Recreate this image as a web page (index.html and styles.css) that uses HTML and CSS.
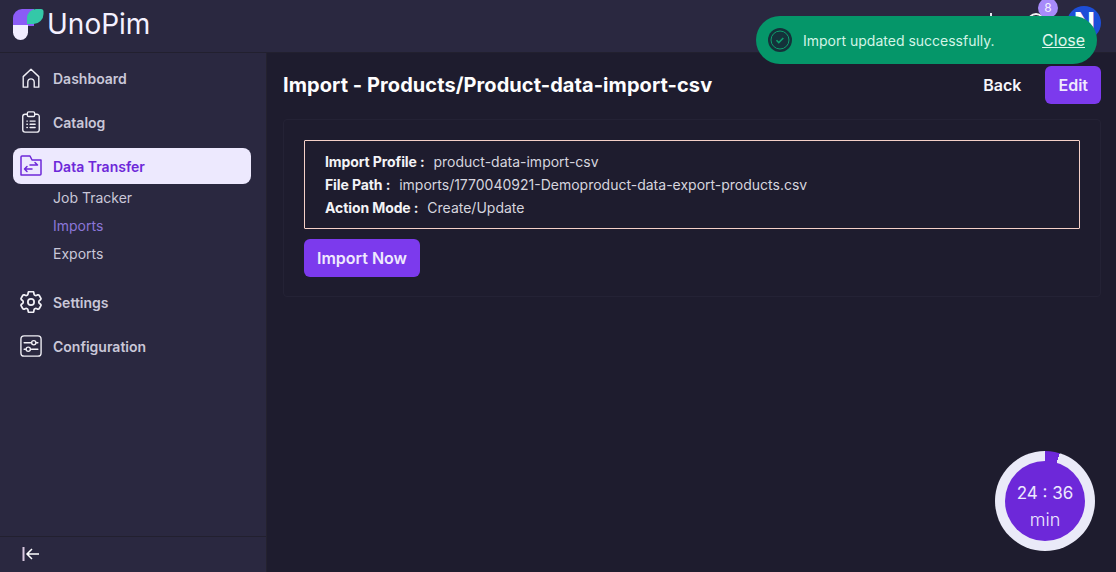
FILE: index.html
```html
<!DOCTYPE html>
<html>
<head>
	<meta charset="utf-8">
	<title>Import - UnoPim</title>
	<link rel="stylesheet" href="styles.css">
</head>
<body>
	<header class="topbar">
		<div class="logo">
			<svg class="logo-mark" width="31" height="31" viewBox="0 0 31 31">
				<path fill="#8b5cf6" d="M0 9a9 9 0 0 1 9-9h12v17H0z"/>
				<path fill="#f1edff" d="M0 16h15v7.500a7.500 7.500 0 0 1-15 0z"/>
				<path fill="#34c8a8" d="M14 9a9 9 0 0 1 9-9h5a2.500 2.500 0 0 1 2.500 2.500V5a10 10 0 0 1-10 10H14z"/>
			</svg>
			<span class="logo-text">UnoPim</span>
		</div>
		<div class="top-actions">
			<span class="tick"></span>
			<div class="bell"><span class="bell-ring"></span><span class="badge">8</span></div>
			<div class="avatar">N</div>
		</div>
	</header>

	<div class="layout">
		<aside class="sidebar">
			<nav class="menu">
				<a class="menu-item">
					<svg class="icon" viewBox="0 0 24 24"><path d="M3.500 22V10.500L12 2.500l8.500 8V22h-5v-5.500a3.500 3.500 0 0 0-7 0V22z"/></svg>
					Dashboard
				</a>
				<a class="menu-item">
					<svg class="icon" viewBox="0 0 24 24"><path d="M8 3.500H5.500a2.500 2.500 0 0 0-2.500 2.500v14.500a2.500 2.500 0 0 0 2.500 2.500h13a2.500 2.500 0 0 0 2.500-2.500V6a2.500 2.500 0 0 0-2.500-2.500H16"/><rect x="8" y="1" width="8" height="5" rx="1.500"/><path d="M7.500 11h.5M11 11h5.500M7.500 14.500h.5M11 14.500h5.500M7.500 18h.5M11 18h5.500"/></svg>
					Catalog
				</a>
				<a class="menu-item active">
					<svg class="icon" viewBox="0 0 22 22"><path d="M1 20V2a1 1 0 0 1 1-1h8l2 4h9v14a1 1 0 0 1-1 1H2a1 1 0 0 1-1-1z"/><path d="M10 10h7.500M15 7.500l2.500 2.500M4.500 14H12M7 11.500 4.500 14 7 16.500"/></svg>
					Data Transfer
				</a>
				<div class="submenu">
					<a>Job Tracker</a>
					<a class="current">Imports</a>
					<a>Exports</a>
				</div>
				<a class="menu-item">
					<svg class="icon" viewBox="2.500 2.500 19 19"><path d="M9.594 3.940c.09-.542.56-.94 1.110-.94h2.593c.55 0 1.020.398 1.110.94l.213 1.281c.063.374.313.686.645.870.074.040.147.083.22.127.325.196.72.257 1.075.124l1.217-.456a1.125 1.125 0 0 1 1.370.49l1.296 2.247a1.125 1.125 0 0 1-.26 1.431l-1.003.827c-.293.241-.438.613-.43.992a7.723 7.723 0 0 1 0 .255c-.008.378.137.75.43.991l1.004.827c.424.35.534.955.26 1.430l-1.298 2.247a1.125 1.125 0 0 1-1.369.491l-1.217-.456c-.355-.133-.75-.072-1.076.124a6.470 6.470 0 0 1-.22.128c-.331.183-.581.495-.644.869l-.213 1.281c-.09.543-.56.94-1.110.94h-2.594c-.55 0-1.019-.398-1.110-.94l-.213-1.281c-.062-.374-.312-.686-.644-.87a6.520 6.520 0 0 1-.22-.127c-.325-.196-.72-.257-1.076-.124l-1.217.456a1.125 1.125 0 0 1-1.369-.49l-1.297-2.247a1.125 1.125 0 0 1 .26-1.431l1.004-.827c.292-.24.437-.613.43-.991a6.932 6.932 0 0 1 0-.255c.007-.38-.138-.751-.43-.992l-1.004-.827a1.125 1.125 0 0 1-.26-1.430l1.297-2.247a1.125 1.125 0 0 1 1.370-.491l1.216.456c.356.133.751.072 1.076-.124.072-.044.146-.086.22-.128.332-.183.582-.495.644-.869l.214-1.280z"/><circle cx="12" cy="12" r="2.700"/></svg>
					Settings
				</a>
				<a class="menu-item">
					<svg class="icon" viewBox="0 0 24 24"><rect x="1" y="1" width="22" height="22" rx="3.500"/><path d="M4.500 8.500h7M18 8.500h1.500M4.500 15.500H6M12.500 15.500h7"/><circle cx="15" cy="8.500" r="2.300"/><circle cx="9" cy="15.500" r="2.300"/></svg>
					Configuration
				</a>
			</nav>
			<div class="collapse">
				<svg width="18" height="14" viewBox="0 0 18 14"><path class="collapse-bar" d="M1.500 0v14"/><path class="collapse-arrow" d="M17 7H5M10 2 5 7l5 5"/></svg>
			</div>
		</aside>

		<main class="content">
			<div class="page-head">
				<h1>Import - Products/Product-data-import-csv</h1>
				<div class="page-actions">
					<a class="back">Back</a>
					<a class="btn">Edit</a>
				</div>
			</div>
			<section class="card">
				<div class="info-box">
					<p><b>Import Profile :</b> product-data-import-csv</p>
					<p><b>File Path :</b> imports/1770040921-Demoproduct-data-export-products.csv</p>
					<p><b>Action Mode :</b> Create/Update</p>
				</div>
				<a class="btn btn-import">Import Now</a>
			</section>
		</main>
	</div>

	<div class="toast">
		<svg width="24" height="24" viewBox="0 0 24 24">
			<circle cx="12" cy="12" r="12" fill="#14323a"/>
			<circle cx="12" cy="12" r="9" fill="none" stroke="#0e9f6e" stroke-width="1"/>
			<path d="M8.500 12.200l2.300 2.300 4.500-4.500" fill="none" stroke="#0e9f6e" stroke-width="1.600"/>
		</svg>
		<span class="toast-text">Import updated successfully.</span>
		<a class="toast-close">Close</a>
	</div>

	<div class="timer">
		<div class="timer-face">
			<span class="timer-time">24 : 36</span>
			<span class="timer-unit">min</span>
		</div>
	</div>
</body>
</html>
```

FILE: styles.css
```css
* { box-sizing: border-box; }
html, body { margin: 0; padding: 0; height: 100%; }
body {
	font-family: Inter, "Liberation Sans", sans-serif;
	background: #1e1c2e;
	color: #fff;
	overflow: hidden;
}
a { cursor: pointer; }

/* top bar */
.topbar {
	height: 53px;
	display: flex;
	align-items: flex-start;
	justify-content: space-between;
	background: #2a2840;
	border-bottom: 1px solid #22202f;
	padding: 0 15px 0 13px;
}
.logo { display: flex; align-items: center; gap: 3px; padding-top: 9px; }
.logo-mark { display: block; }
.logo-text { font-size: 28px; font-weight: 400; color: #f4f1ff; line-height: 31px; }
.top-actions { display: flex; align-items: flex-start; }
.tick { width: 2px; height: 4px; background: #e5e5ee; margin: 13px 35px 0 0; }
.bell { width: 18px; height: 34px; margin-right: 22px; position: relative; }
.bell-ring { position: absolute; left: 0; top: 13px; width: 18px; height: 18px; border: 2px solid #f3f3f3; border-radius: 50%; }
.badge {
	position: absolute;
	left: 11px;
	top: -2px;
	width: 20px;
	height: 20px;
	border-radius: 50%;
	background: #a78bfa;
	font-size: 12px;
	line-height: 20px;
	text-align: center;
	color: #f3f0ff;
}
.avatar {
	width: 34px;
	height: 34px;
	margin-top: 6px;
	border-radius: 50%;
	background: #1d4ed8;
	font-size: 28px;
	font-weight: 700;
	line-height: 34px;
	text-align: right;
	overflow: hidden;
	padding-right: 6px;
}

.layout { display: flex; height: 519px; }

/* sidebar */
.sidebar {
	width: 267px;
	background: #2a2840;
	border-right: 1px solid #24222f;
	display: flex;
	flex-direction: column;
	justify-content: space-between;
}
.menu { padding: 7px 15px 0 13px; }
.menu-item {
	height: 36px;
	margin-bottom: 8px;
	display: flex;
	align-items: center;
	gap: 11px;
	padding-left: 7px;
	border-radius: 8px;
	font-size: 14px;
	font-weight: 600;
	color: #c9c7d8;
}
.menu-item.active { background: #ede9fe; color: #6d28d9; margin-bottom: 0; }
.icon {
	width: 22px;
	height: 22px;
	fill: none;
	stroke: #f1f0f6;
	stroke-width: 1.500;
	stroke-linejoin: round;
	stroke-linecap: round;
	flex: none;
}
.active .icon { stroke: #6d28d9; }
.submenu { display: flex; flex-direction: column; padding: 0 0 16px 40px; }
.submenu a { height: 28px; line-height: 28px; font-size: 14px; color: #c9c7d8; }
.submenu a.current { color: #8b76d8; }
.collapse {
	height: 36px;
	border-top: 1px solid #22202f;
	padding: 10px 0 0 22px;
}
.collapse svg { display: block; }
.collapse-bar { stroke: #d9c8e0; stroke-width: 2; fill: none; }
.collapse-arrow { stroke: #fff; stroke-width: 1.500; fill: none; }

/* main */
.content { flex: 1; padding: 13px 15px 0 16px; }
.page-head { display: flex; justify-content: space-between; align-items: center; height: 38px; }
.page-head h1 { margin: 0; font-size: 20px; font-weight: 700; line-height: 38px; letter-spacing: .07px; color: #fdfdfe; }
.page-actions { display: flex; align-items: center; gap: 24px; }
.back { font-size: 16px; font-weight: 600; color: #f7f7fb; }
.btn {
	display: inline-block;
	height: 38px;
	line-height: 38px;
	padding: 0 13px;
	background: #7c3aed;
	border-radius: 6px;
	font-size: 16px;
	font-weight: 600;
	color: #efe9fd;
}
.card {
	margin-top: 15px;
	height: 178px;
	border: 1px solid #242235;
	border-radius: 4px;
	padding: 20px 20px 0;
}
.info-box {
	height: 89px;
	border: 1px solid #f5d0c8;
	border-radius: 1px;
	padding: 9px 20px 0;
	margin-bottom: 10px;
}
.info-box p { margin: 0; font-size: 14px; line-height: 23px; color: #d6d5de; }
.info-box b { color: #f3f3f6; font-weight: 700; margin-right: 5px; letter-spacing: -.1px; }

/* toast */
.toast {
	position: absolute;
	left: 756px;
	top: 16px;
	width: 341px;
	height: 48px;
	border-radius: 24px;
	background: #059669;
	display: flex;
	align-items: center;
	padding: 0 12px;
}
.toast svg { flex: none; }
.toast-text { margin-left: 11px; font-size: 14px; color: #d3f4e6; flex: 1; }
.toast-close { font-size: 16px; color: #e0f7ee; text-decoration: underline; }

/* timer */
.timer {
	position: absolute;
	left: 995px;
	top: 451px;
	width: 100px;
	height: 100px;
	border-radius: 50%;
	background: conic-gradient(#6d28d9 0 17deg, #eaeaf8 17deg);
	display: flex;
	align-items: center;
	justify-content: center;
}
.timer-face {
	width: 80px;
	height: 80px;
	border-radius: 50%;
	background: #6d28d9;
	display: flex;
	flex-direction: column;
	align-items: center;
	color: #ede9fe;
	padding-top: 20px;
}
.timer-time { font-size: 17px; line-height: 24px; font-weight: 400; }
.timer-unit { font-size: 18px; line-height: 24px; margin-top: 3px; font-weight: 300; }
```
